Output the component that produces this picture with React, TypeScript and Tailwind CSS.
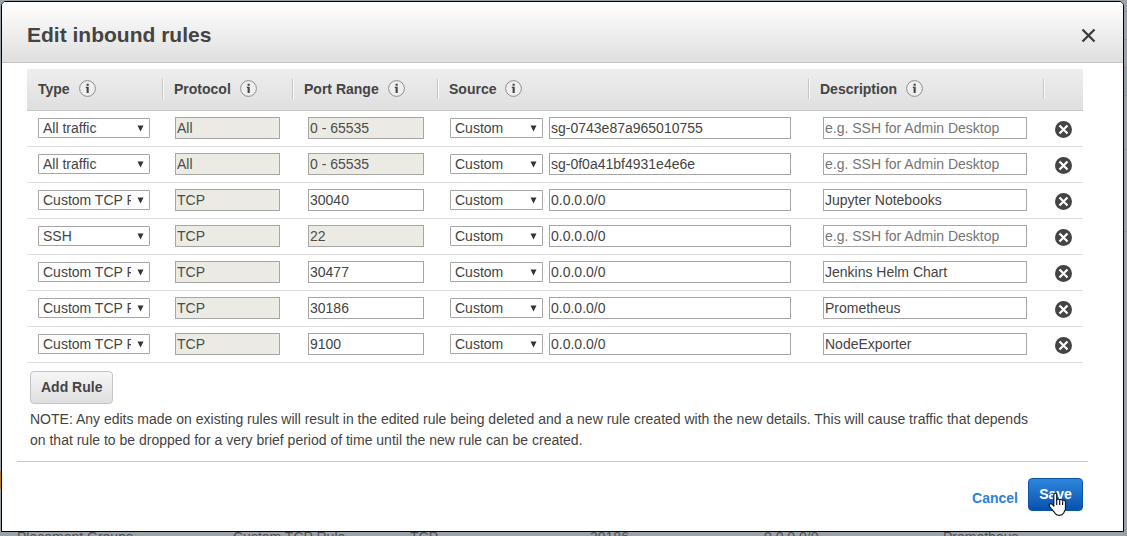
import type { ReactNode } from "react";

type Rule = {
  type: string;
  protocol: string;
  port: string;
  portLocked: boolean;
  source: string;
  description: string;
};

const rules: Rule[] = [
  { type: "All traffic", protocol: "All", port: "0 - 65535", portLocked: true, source: "sg-0743e87a965010755", description: "" },
  { type: "All traffic", protocol: "All", port: "0 - 65535", portLocked: true, source: "sg-0f0a41bf4931e4e6e", description: "" },
  { type: "Custom TCP Rule", protocol: "TCP", port: "30040", portLocked: false, source: "0.0.0.0/0", description: "Jupyter Notebooks" },
  { type: "SSH", protocol: "TCP", port: "22", portLocked: true, source: "0.0.0.0/0", description: "" },
  { type: "Custom TCP Rule", protocol: "TCP", port: "30477", portLocked: false, source: "0.0.0.0/0", description: "Jenkins Helm Chart" },
  { type: "Custom TCP Rule", protocol: "TCP", port: "30186", portLocked: false, source: "0.0.0.0/0", description: "Prometheus" },
  { type: "Custom TCP Rule", protocol: "TCP", port: "9100", portLocked: false, source: "0.0.0.0/0", description: "NodeExporter" },
];

function InfoIcon() {
  return (
    <svg width="17" height="17" viewBox="0 0 17 17" aria-hidden="true">
      <circle cx="8.500" cy="8.500" r="7.900" fill="#efefef" stroke="#8e8e8e" strokeWidth="1" />
      <path d="M7.600 3.800h2.100v1.900H7.600zM6.800 6.800h2.900V13H7.600V8H6.800z" fill="#444" />
    </svg>
  );
}

function HeaderCell({ label, first = false }: { label?: string; first?: boolean }) {
  return (
    <th className="p-0 pb-[2px] text-left font-bold">
      <div className={`flex h-5 items-center gap-[9px] pl-[11px] ${first ? "" : "border-l border-[#c6c6c6] shadow-[inset_1px_0_0_#fafafa]"}`}>
        {label && (
          <>
            <span>{label}</span>
            <InfoIcon />
          </>
        )}
      </div>
    </th>
  );
}

function Picker({ label, value, options, className }: { label: string; value: string; options: string[]; className: string }) {
  return (
    <span className={`relative block h-5 shrink-0 ${className}`}>
      <select
        aria-label={label}
        defaultValue={value}
        className="block h-5 w-full appearance-none overflow-hidden rounded-[1px] border border-[#a6a6a6] bg-white pr-[18px] pl-1 text-sm leading-[18px]"
      >
        {options.map((o) => (
          <option key={o}>{o}</option>
        ))}
      </select>
      <svg className="pointer-events-none absolute top-[7px] right-[6px]" width="7" height="7" viewBox="0 0 7 7" aria-hidden="true">
        <path d="M0.500 0.500h6L3.500 6.500z" fill="#333" />
      </svg>
    </span>
  );
}

function Field({ label, value, placeholder, locked = false, className }: { label: string; value: string; placeholder?: string; locked?: boolean; className: string }) {
  return (
    <input
      type="text"
      aria-label={label}
      defaultValue={value}
      placeholder={placeholder}
      disabled={locked}
      className={`block h-[22px] border border-[#a6a6a6] px-px text-sm placeholder:text-[#757575] ${locked ? "bg-[#ebebe4] text-[#4c4c4c]" : "bg-white text-[#444]"} ${className}`}
    />
  );
}

function Cell({ children, className }: { children: ReactNode; className: string }) {
  return <td className={`h-9 border-b border-[#dedede] ${className}`}>{children}</td>;
}

function Backdrop() {
  return (
    <div aria-hidden="true" className="absolute inset-0 flex flex-col justify-between overflow-hidden bg-[#9ba3a9] text-sm text-[#4e5255]">
      <div className="flex flex-col items-end">
        <div className="h-[12px] w-1 border-b border-[#8a9197]" />
        <div className="h-[28px] w-1 border-b border-[#8a9197]" />
        <div className="h-[28px] w-1 border-b border-[#8a9197]" />
        <div className="h-[28px] w-1 border-b border-[#8a9197] bg-[#929eac]" />
        <div className="h-[54px] w-1 border-b border-[#8a9197]" />
        <div className="h-[82px] w-1 border-b border-[#8a9197]" />
      </div>
      <div>
        <div className="mb-[38px] h-[18px] w-1 bg-[#b8772a]" />
        <div className="flex h-[9px] w-full overflow-hidden leading-5 whitespace-nowrap">
          <span className="w-[216px] pl-[17px]">Placement Groups</span>
          <span className="w-[194px] pl-[17px]">Custom TCP Rule</span>
          <span className="w-[180px]">TCP</span>
          <span className="w-[174px]">30186</span>
          <span className="w-[179px]">0.0.0.0/0</span>
          <span>Prometheus</span>
        </div>
      </div>
    </div>
  );
}

function HandPointer() {
  return (
    <svg className="pointer-events-none absolute top-[13px] left-[19px]" width="20" height="25" viewBox="0 0 20 25" aria-hidden="true">
      <path
        d="M5.800 2.500C5.800 .6 8.700 .6 8.700 2.500V8c0-1.300 3-1.300 3 .3 0-1.300 2.900-1.100 2.900.6 0-1.200 2.900-.9 2.900 1.100V16c0 3-1.500 3.800-1.900 5-1.400 3-7.200 3-8.600.3C5.800 19.300 3.500 17.500 1.500 14.200c-1.100-2 1.100-3.500 2.700-1.800L5.800 14z"
        fill="#fff"
        stroke="#111827"
        strokeWidth="1.200"
        strokeLinejoin="round"
      />
      <path d="M8.700 7.500V13M11.700 8.500V13M14.600 9.500V13" stroke="#111827" strokeWidth="1.200" />
    </svg>
  );
}

export default function App() {
  return (
    <div className="relative min-h-screen pt-px pr-[3px] pb-1 pl-px font-['Liberation_Sans',Arial,sans-serif] text-sm text-[#444]">
      <Backdrop />
      <section role="dialog" aria-labelledby="dialog-title" className="relative rounded-t-[5px] border border-black bg-white">
        <header className="flex h-[61px] items-center justify-between rounded-t-[4px] border-b border-[#c4c4c4] bg-linear-to-b from-white to-[#dfdfdf] pt-[6px] pr-[26px] pl-[25px]">
          <h1 id="dialog-title" className="text-[21px] leading-7 font-bold">Edit inbound rules</h1>
          <button type="button" aria-label="Close" className="p-px">
            <svg width="15" height="15" viewBox="0 0 15 15" aria-hidden="true">
              <path d="M1.500 1.500l12 12M13.500 1.500l-12 12" stroke="#3c3c3c" strokeWidth="2.300" />
            </svg>
          </button>
        </header>

        <div className="pt-[6px] pr-10 pl-[25px]">
          <table className="w-full table-fixed border-separate border-spacing-0">
            <colgroup>
              <col className="w-[135px]" />
              <col className="w-[130px]" />
              <col className="w-[145px]" />
              <col />
              <col className="w-[235px]" />
              <col className="w-10" />
            </colgroup>
            <thead className="bg-linear-to-b from-[#eeeeee] to-[#dfdfdf]">
              <tr className="[&>th]:h-[42px] [&>th]:border-b [&>th]:border-[#c8c8c8]">
                <HeaderCell label="Type" first />
                <HeaderCell label="Protocol" />
                <HeaderCell label="Port Range" />
                <HeaderCell label="Source" />
                <HeaderCell label="Description" />
                <HeaderCell />
              </tr>
            </thead>
            <tbody>
              {rules.map((r, i) => (
                <tr key={i}>
                  <Cell className="pb-[2px] pl-[11px]">
                    <Picker label="Type" value={r.type} options={["All traffic", "Custom TCP Rule", "SSH"]} className="w-28" />
                  </Cell>
                  <Cell className="pb-[2px] pl-[13px]">
                    <Field label="Protocol" value={r.protocol} locked className="w-[105px]" />
                  </Cell>
                  <Cell className="pb-[2px] pl-4">
                    <Field label="Port range" value={r.port} locked={r.portLocked} className="w-[116px]" />
                  </Cell>
                  <Cell className="pr-[17px] pb-[2px] pl-[13px]">
                    <div className="flex items-center gap-[6px]">
                      <Picker label="Source type" value="Custom" options={["Custom", "Anywhere", "My IP"]} className="w-[93px]" />
                      <Field label="Source" value={r.source} className="min-w-0 flex-1" />
                    </div>
                  </Cell>
                  <Cell className="pr-4 pb-[2px] pl-[15px]">
                    <Field label="Description" value={r.description} placeholder="e.g. SSH for Admin Desktop" className="w-full" />
                  </Cell>
                  <Cell className="pt-[2px] pl-3">
                    <button type="button" aria-label="Remove rule" className="block">
                      <svg width="17" height="17" viewBox="0 0 17 17" aria-hidden="true">
                        <circle cx="8.500" cy="8.500" r="8.500" fill="#444" />
                        <path d="M4.500 4.500l8 8M12.500 4.500l-8 8" stroke="#fff" strokeWidth="2.200" />
                      </svg>
                    </button>
                  </Cell>
                </tr>
              ))}
            </tbody>
          </table>
        </div>

        <div className="pt-2 pr-20 pl-7">
          <button type="button" className="block h-[33px] rounded-[4px] border border-[#c4c4c4] bg-linear-to-b from-[#f6f6f6] to-[#dfdfdf] px-[10px] pb-[2px] font-bold">
            Add Rule
          </button>
          <p className="pt-[5px] leading-[21px]">
            NOTE: Any edits made on existing rules will result in the edited rule being deleted and a new rule created with the new details. This will cause traffic that depends on that rule to be dropped for a very brief period of time until the new rule can be created.
          </p>
        </div>

        <footer className="mt-[10px] mr-[35px] ml-[15px] flex items-start justify-end gap-[10px] border-t border-[#c8c8c8] pt-4 pr-[5px] pb-5">
          <a href="#cancel" className="pt-[10px] font-bold text-[#2e7fdc]">Cancel</a>
          <button type="button" className="relative h-[33px] w-[55px] rounded-[4px] border border-[#0d55a8] bg-linear-to-b from-[#2f86df] to-[#0552ab] pb-[2px] font-bold text-white">
            Save
            <HandPointer />
          </button>
        </footer>
      </section>
    </div>
  );
}
